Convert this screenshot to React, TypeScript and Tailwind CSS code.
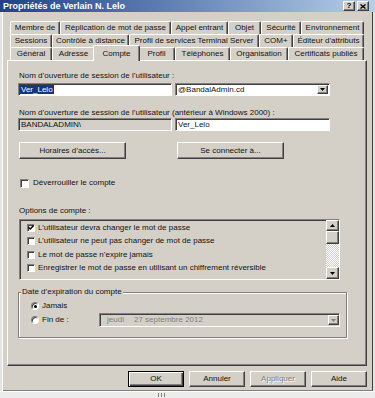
import React from 'react';

const raised =
  'border border-t-white border-l-white border-r-[#404040] border-b-[#404040] shadow-[inset_-1px_-1px_0_#808080]';
const sunken =
  'border border-t-[#808080] border-l-[#808080] border-r-white border-b-white shadow-[inset_1px_1px_0_#404040]';

type T = { label: string; w: string; active?: boolean };

const row1: T[] = [
  { label: 'Membre de', w: 'w-[50px]' },
  { label: 'Réplication de mot de passe', w: 'w-[111px]' },
  { label: 'Appel entrant', w: 'w-[57px]' },
  { label: 'Objet', w: 'w-[33px]' },
  { label: 'Sécurité', w: 'w-[40px]' },
  { label: 'Environnement', w: 'w-[63px]' },
];
const row2: T[] = [
  { label: 'Sessions', w: 'w-[42px]' },
  { label: 'Contrôle à distance', w: 'w-[77px]' },
  { label: 'Profil de services Terminal Server', w: 'w-[130px]' },
  { label: 'COM+', w: 'w-[34px]' },
  { label: "Éditeur d'attributs", w: 'w-[71px]' },
];
const row3: T[] = [
  { label: 'Général', w: 'w-[42px]' },
  { label: 'Adresse', w: 'w-[43px]' },
  { label: 'Compte', w: 'w-[47px]', active: true },
  { label: 'Profil', w: 'w-[37px]' },
  { label: 'Téléphones', w: 'w-[55px]' },
  { label: 'Organisation', w: 'w-[58px]' },
  { label: 'Certificats publiés', w: 'w-[76px]' },
];

function Tab({ t }: { t: T }) {
  if (t.active)
    return (
      <div
        className={`${t.w} h-[16px] -mt-[2px] -mx-[2px] -mb-[1px] relative z-10 bg-[#d4d0c8] flex justify-center pt-[3px] border-l border-t border-r border-l-white border-t-white border-r-[#404040] shadow-[inset_-1px_0_0_#808080] rounded-t-[2px] whitespace-nowrap`}
      >
        {t.label}
      </div>
    );
  return (
    <div
      className={`${t.w} h-[13px] flex items-center justify-center border-l border-t border-r border-l-white border-t-white border-r-[#404040] shadow-[inset_-1px_0_0_#808080] rounded-t-[2px] whitespace-nowrap`}
    >
      {t.label}
    </div>
  );
}

function Tri({ down = true, color = '#000' }: { down?: boolean; color?: string }) {
  return (
    <svg width="5" height="3" viewBox="0 0 5 3">
      <polygon points={down ? '0,0 5,0 2.5,3' : '0,3 5,3 2.5,0'} fill={color} />
    </svg>
  );
}

function Check({ checked = false, size = 'w-[8px] h-[8px]' }: { checked?: boolean; size?: string }) {
  return (
    <div className={`${size} bg-white ${sunken} flex items-center justify-center shrink-0`}>
      {checked && (
        <svg width="6" height="5" viewBox="0 0 6 5">
          <path d="M0.5 2.2 L2.2 4 L5.6 0.6" stroke="#000" strokeWidth="1.4" fill="none" />
        </svg>
      )}
    </div>
  );
}

function Radio({ checked = false }: { checked?: boolean }) {
  return (
    <div className="w-[8px] h-[8px] rounded-full bg-white border border-t-[#808080] border-l-[#808080] border-r-white border-b-white shadow-[inset_1px_1px_0_#404040] flex items-center justify-center shrink-0">
      {checked && <div className="w-[3px] h-[3px] rounded-full bg-black" />}
    </div>
  );
}

const options = [
  { label: 'L’utilisateur devra changer le mot de passe', checked: true },
  { label: 'L’utilisateur ne peut pas changer de mot de passe', checked: false },
  { label: 'Le mot de passe n’expire jamais', checked: false },
  { label: 'Enregistrer le mot de passe en utilisant un chiffrement réversible', checked: false },
];

export default function App() {
  return (
    <div className="w-[375px] h-[398px] overflow-hidden bg-[#d4d0c8] font-['Liberation_Sans',Arial,sans-serif] text-[8px] leading-[10px] text-[#111] flex flex-col">
      {/* Title bar */}
      <div className="h-[12px] shrink-0 flex items-center pl-[3px] pr-[6px] bg-gradient-to-r from-[#1f4287] to-[#b8cfe9]">
        <span className="font-bold text-white text-[9px] whitespace-nowrap">Propriétés de Verlain N. Lelo</span>
        <div className="ml-auto flex gap-[2px]">
          <div className={`w-[12px] h-[10px] bg-[#d4d0c8] ${raised} flex items-center justify-center font-bold leading-none text-[8px] text-black`}>?</div>
          <div className={`w-[12px] h-[10px] bg-[#d4d0c8] ${raised} flex items-center justify-center`}>
            <svg width="6" height="5" viewBox="0 0 6 5">
              <path d="M0.5 0.5 L5.5 4.5 M5.5 0.5 L0.5 4.5" stroke="#000" strokeWidth="1.4" />
            </svg>
          </div>
        </div>
      </div>

      <div className="flex h-[379px] shrink-0">
        <div className="w-[3px] bg-[#e4e4e4] border-r border-r-white" />
        <div className="w-[370px] border-r border-r-[#404040] border-b border-b-[#808080] flex flex-col">
          {/* Tabs */}
          <div className="mt-[9px] ml-[7px] flex flex-col">
            <div className="flex">{row1.map((t) => <Tab key={t.label} t={t} />)}</div>
            <div className="flex">{row2.map((t) => <Tab key={t.label} t={t} />)}</div>
            <div className="flex">{row3.map((t) => <Tab key={t.label} t={t} />)}</div>
          </div>

          {/* Panel */}
          <div className={`w-[360px] h-[306px] ml-[4px] ${raised} flex flex-col pl-[10px]`}>
            <div className="mt-[10px] ml-[1px] h-[10px] whitespace-nowrap">Nom d’ouverture de session de l’utilisateur :</div>
            <div className="mt-[2px] flex gap-[3px]">
              <div className={`w-[154px] h-[13px] bg-white ${sunken} flex items-center pl-[1px]`}>
                <span className="bg-[#16357a] text-white px-[1px] leading-[9px]">Ver_Lelo</span>
              </div>
              <div className={`w-[155px] h-[13px] bg-white ${sunken} flex items-center justify-between pl-[2px] pr-[1px]`}>
                <span>@BandalAdmin.cd</span>
                <div className={`w-[11px] h-[9px] bg-[#d4d0c8] ${raised} flex items-center justify-center`}>
                  <Tri />
                </div>
              </div>
            </div>

            <div className="mt-[12px] ml-[1px] h-[10px] whitespace-nowrap">Nom d’ouverture de session de l’utilisateur (antérieur à Windows 2000) :</div>
            <div className="flex gap-[3px]">
              <div className={`w-[154px] h-[13px] bg-[#d4d0c8] ${sunken} flex items-center pl-[2px]`}>BANDALADMIN\</div>
              <div className={`w-[155px] h-[13px] bg-white ${sunken} flex items-center pl-[2px]`}>Ver_Lelo</div>
            </div>

            <div className="mt-[11px] ml-[1px] flex gap-[51px]">
              <div className={`w-[107px] h-[17px] ${raised} flex items-center justify-center`}>Horaires d’accès...</div>
              <div className={`w-[107px] h-[17px] ${raised} flex items-center justify-center`}>Se connecter à...</div>
            </div>

            <div className="mt-[19px] ml-[2px] h-[10px] flex items-center gap-[4px]">
              <Check size="w-[9px] h-[9px]" />
              <span>Déverrouiller le compte</span>
            </div>

            <div className="mt-[18px] ml-[1px] h-[10px]">Options de compte :</div>

            <div className={`mt-[3px] ml-[1px] w-[321px] h-[61px] bg-[#d4d0c8] ${sunken} flex`}>
              <div className="flex-1 flex flex-col pt-[1px] pl-[7px]">
                {options.map((o) => (
                  <div key={o.label} className="h-[13.5px] flex items-center gap-[3px] whitespace-nowrap">
                    <Check checked={o.checked} />
                    <span>{o.label}</span>
                  </div>
                ))}
              </div>
              <div className="w-[13px] flex flex-col">
                <div className={`h-[11px] bg-[#d4d0c8] ${raised} flex items-center justify-center`}>
                  <Tri down={false} />
                </div>
                <div className={`h-[13px] bg-[#d4d0c8] ${raised}`} />
                <div className="flex-1 bg-[repeating-conic-gradient(#d4d0c8_0_25%,#ffffff_0_50%)] bg-[length:2px_2px]" />
                <div className={`h-[12px] bg-[#d4d0c8] ${raised} flex items-center justify-center`}>
                  <Tri />
                </div>
              </div>
            </div>

            <div className="mt-[12px] w-[329px] h-[46px] relative border border-[#808080] shadow-[1px_1px_0_#ffffff,inset_1px_1px_0_#ffffff] flex flex-col pl-[12px]">
              <span className="absolute -top-[6px] left-[2px] bg-[#d4d0c8] px-[1px] whitespace-nowrap">Date d’expiration du compte</span>
              <div className="mt-[8px] h-[10px] flex items-center gap-[3px]">
                <Radio checked />
                <span>Jamais</span>
              </div>
              <div className="mt-[2px] h-[14px] flex items-center">
                <div className="w-[68px] flex items-center gap-[3px]">
                  <Radio />
                  <span>Fin de :</span>
                </div>
                <div className={`w-[241px] h-[14px] bg-[#d4d0c8] ${sunken} flex items-center pl-[7px] text-[#808080]`}>
                  <span className="w-[27px]">jeudi</span>
                  <span>27 septembre 2012</span>
                  <div className={`ml-auto w-[11px] h-[10px] bg-[#d4d0c8] ${raised} flex items-center justify-center`}>
                    <Tri color="#808080" />
                  </div>
                </div>
              </div>
            </div>
          </div>

          {/* Bottom buttons */}
          <div className="mt-[5px] ml-[4px] w-[360px] flex justify-end gap-[5px]">
            <div className="w-[56px] h-[16px] border border-black shadow-[inset_1px_1px_0_#ffffff,inset_-1px_-1px_0_#404040,inset_-2px_-2px_0_#808080] flex items-center justify-center">OK</div>
            <div className={`w-[56px] h-[16px] ${raised} flex items-center justify-center`}>Annuler</div>
            <div className={`w-[56px] h-[16px] ${raised} flex items-center justify-center text-[#808080] [text-shadow:1px_1px_0_#ffffff]`}>Appliquer</div>
            <div className={`w-[56px] h-[16px] ${raised} flex items-center justify-center`}>Aide</div>
          </div>
        </div>
        <div className="flex-1 bg-[#e4e4e4]" />
      </div>

      <div className="h-[7px] bg-[#ececec] border-t border-t-white pl-[158px] pt-[1px] flex gap-[2px]">
        <span className="w-[1px] h-[4px] bg-[#808080]" />
        <span className="w-[1px] h-[4px] bg-[#808080]" />
        <span className="w-[1px] h-[4px] bg-[#808080]" />
      </div>
    </div>
  );
}
